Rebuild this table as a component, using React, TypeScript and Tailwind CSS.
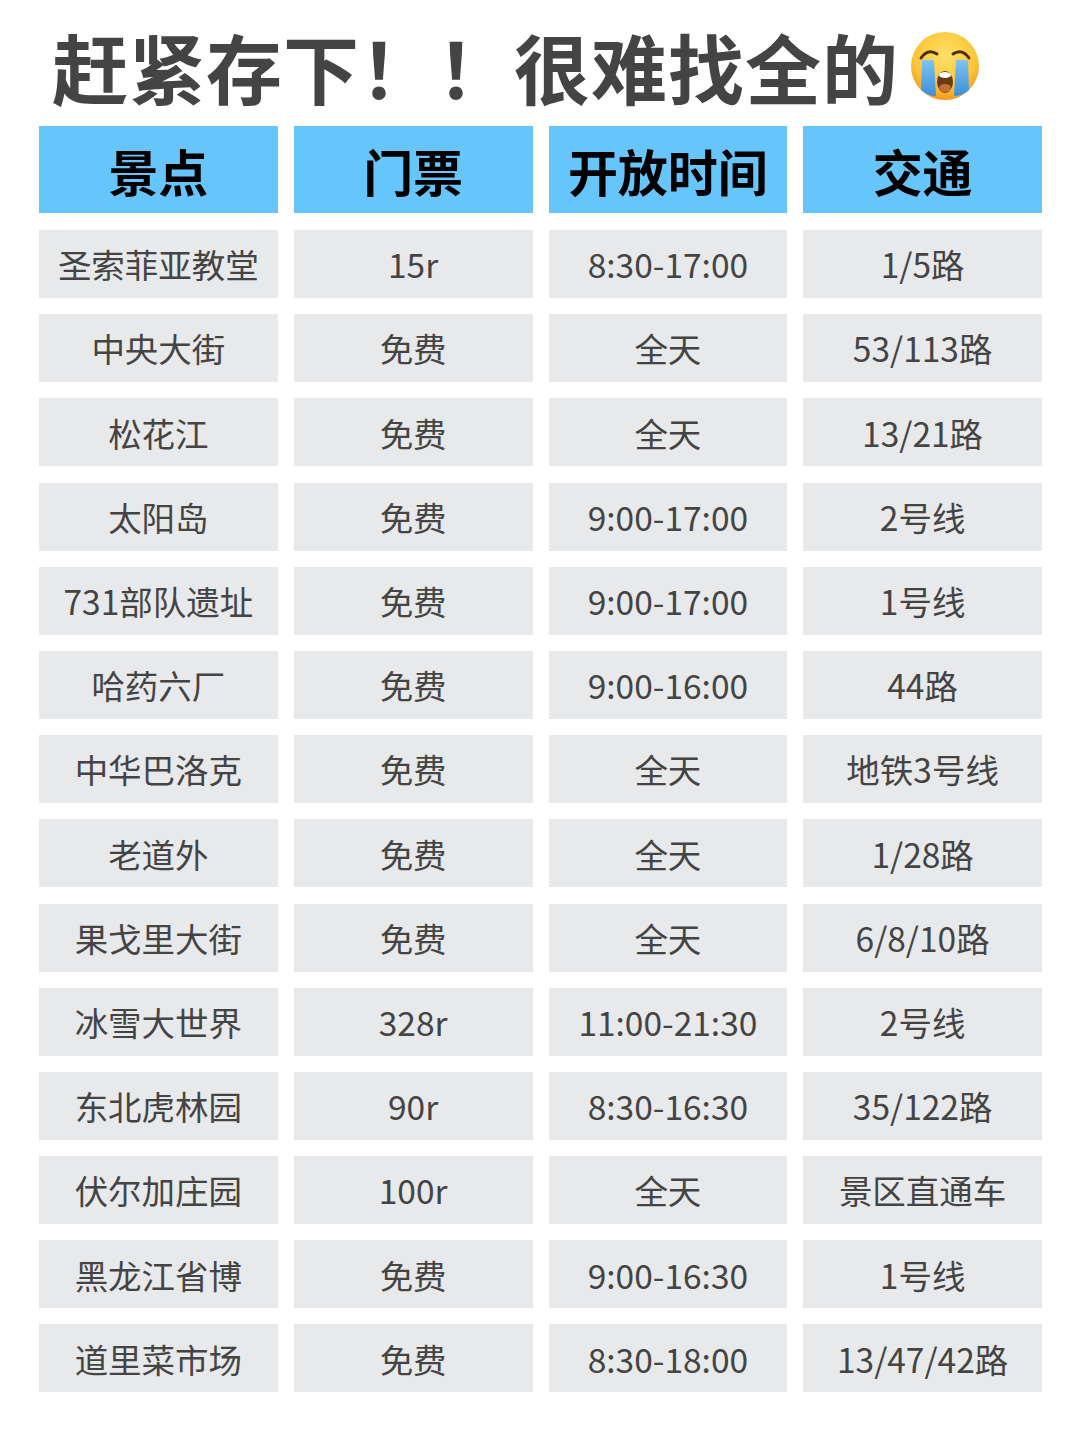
const rows: string[][] = [
  ['圣索菲亚教堂', '15r', '8:30-17:00', '1/5路'],
  ['中央大街', '免费', '全天', '53/113路'],
  ['松花江', '免费', '全天', '13/21路'],
  ['太阳岛', '免费', '9:00-17:00', '2号线'],
  ['731部队遗址', '免费', '9:00-17:00', '1号线'],
  ['哈药六厂', '免费', '9:00-16:00', '44路'],
  ['中华巴洛克', '免费', '全天', '地铁3号线'],
  ['老道外', '免费', '全天', '1/28路'],
  ['果戈里大街', '免费', '全天', '6/8/10路'],
  ['冰雪大世界', '328r', '11:00-21:30', '2号线'],
  ['东北虎林园', '90r', '8:30-16:30', '35/122路'],
  ['伏尔加庄园', '100r', '全天', '景区直通车'],
  ['黑龙江省博', '免费', '9:00-16:30', '1号线'],
  ['道里菜市场', '免费', '8:30-18:00', '13/47/42路'],
];

const headers = ['景点', '门票', '开放时间', '交通'];

function CryingFace() {
  return (
    <svg width="72" height="72" viewBox="0 0 72 72" className="ml-[10px] shrink-0">
      <defs>
        <radialGradient id="face" cx="50%" cy="35%" r="65%">
          <stop offset="0%" stopColor="#ffe066" />
          <stop offset="70%" stopColor="#fcc537" />
          <stop offset="100%" stopColor="#f29a1e" />
        </radialGradient>
        <linearGradient id="tear" x1="0" y1="0" x2="0" y2="1">
          <stop offset="0%" stopColor="#7ec3f2" />
          <stop offset="100%" stopColor="#3b8fd8" />
        </linearGradient>
      </defs>
      <circle cx="36" cy="36" r="34" fill="url(#face)" />
      {/* brows / closed eyes */}
      <path d="M12 28 Q19 18 28 24" stroke="#4a2e12" strokeWidth="3" fill="none" strokeLinecap="round" />
      <path d="M44 24 Q53 18 60 28" stroke="#4a2e12" strokeWidth="3" fill="none" strokeLinecap="round" />
      {/* tears */}
      <path d="M13 30 L25 30 L27 66 Q19 66 12 60 Z" fill="url(#tear)" />
      <path d="M47 30 L59 30 L60 60 Q53 66 45 66 Z" fill="url(#tear)" />
      {/* mouth */}
      <ellipse cx="36" cy="52" rx="8" ry="11" fill="#6b3a14" />
      <ellipse cx="36" cy="45" rx="6" ry="3" fill="#ffffff" />
      <ellipse cx="36" cy="58" rx="6" ry="4" fill="#c0703a" />
    </svg>
  );
}

export default function App() {
  return (
    <div
      className="w-[1080px] h-[1439px] bg-white"
      style={{ fontFamily: '"Noto Sans CJK SC", "Noto Sans", sans-serif' }}
    >
      {/* Title */}
      <div className="flex h-[126px] items-center pl-[52px] pt-[6px]">
        <h1 className="text-[76px] font-bold leading-none tracking-[1px] text-[#444444]">
          赶紧存下！！很难找全的
        </h1>
        <CryingFace />
      </div>

      {/* Table */}
      <div className="grid grid-cols-4 gap-x-4 pl-[39px] pr-[38px]">
        {headers.map((h) => (
          <div
            key={h}
            className="flex h-[87px] items-center justify-center bg-[#66c5fa] text-[50px] font-bold leading-none text-black"
          >
            {h}
          </div>
        ))}
      </div>

      <div className="mt-[17px] grid grid-cols-4 gap-x-4 gap-y-[16.2px] pl-[39px] pr-[38px]">
        {rows.map((r, i) =>
          r.map((c, j) => (
            <div
              key={`${i}-${j}`}
              className="flex h-[68px] items-center justify-center bg-[#e8e9eb] text-[33.5px] leading-none text-[#444444]"
            >
              {c}
            </div>
          ))
        )}
      </div>
    </div>
  );
}
